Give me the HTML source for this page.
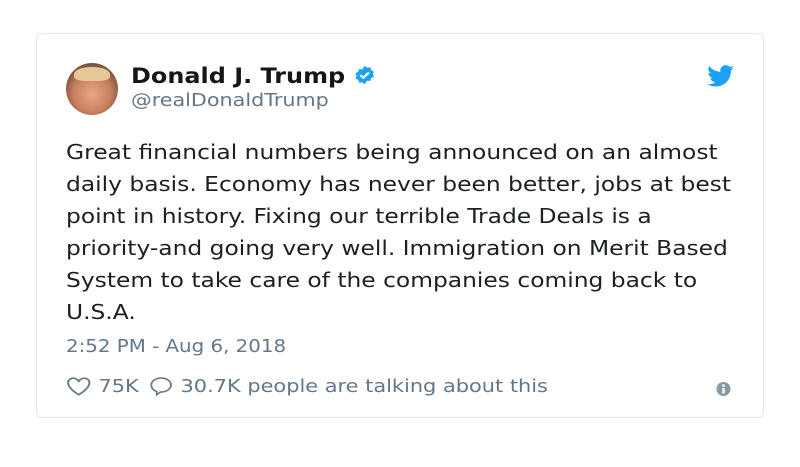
<!DOCTYPE html>
<html><head><style>
body{margin:0;width:800px;height:467px;background:#fff;font-family:"DejaVu Sans","Liberation Sans",sans-serif;position:relative;overflow:hidden}
.card{position:absolute;left:36px;top:33px;width:728px;height:385px;border:1px solid #e1e8ed;border-radius:6px;box-sizing:border-box}
.av{position:absolute;left:66px;top:63px;width:52px;height:52px;border-radius:50%;background:radial-gradient(circle at 50% 60%,#e8a58a 0,#c9805f 45%,#7a5040 75%,#3a3a44 100%)}
.av:before{content:"";position:absolute;left:8px;top:4px;width:36px;height:14px;border-radius:50% 50% 30% 30%;background:#e6c79a}
.name{position:absolute;left:131px;top:64px;font-weight:bold;font-size:21px;color:#14171a;white-space:nowrap;transform:scaleX(1.14);transform-origin:left}
.handle{position:absolute;left:131px;top:90px;font-size:18px;color:#657786;transform:scaleX(1.15);transform-origin:left}
.body{position:absolute;left:66px;top:136px;white-space:nowrap;font-size:20.2px;line-height:32px;color:#1c2022;transform:scaleX(1.157);transform-origin:left}
.time{position:absolute;left:66px;top:336px;font-size:18px;color:#657786;transform:scaleX(1.10);transform-origin:left;white-space:nowrap}
.act{position:absolute;left:66px;top:374px;font-size:18px;color:#657786;white-space:nowrap;display:flex;align-items:center;gap:6px;transform:scaleX(1.16);transform-origin:left}
</style></head><body>
<div class="card"></div>
<div class="av"></div>
<div class="name">Donald J. Trump <svg width="20" height="22" viewBox="0 0 24 24" style="vertical-align:-3px"><path fill="#1da1f2" d="M12 1l2.6 2.2 3.4-.3.8 3.3 3 1.7-1.3 3.1 1.3 3.1-3 1.7-.8 3.3-3.4-.3L12 23l-2.6-2.2-3.4.3-.8-3.3-3-1.7L3.5 13 2.2 9.9l3-1.7.8-3.3 3.4.3z"/><path d="M7.5 12.3l3 3 6-6.3" stroke="#fff" stroke-width="2.4" fill="none"/></svg></div>
<div class="handle">@realDonaldTrump</div>
<svg style="position:absolute;left:707px;top:65px" width="27" height="22" viewBox="0 0 24 20"><path fill="#1da1f2" d="M24 2.4c-.9.4-1.8.7-2.8.8 1-.6 1.8-1.6 2.2-2.7-1 .6-2 1-3.1 1.2C19.4.7 18.1.1 16.7.1c-2.7 0-4.9 2.2-4.9 4.9 0 .4 0 .8.1 1.1C7.8 5.9 4.2 4 1.7 1 1.3 1.7 1 2.6 1 3.5c0 1.7.9 3.2 2.2 4.1-.8 0-1.6-.2-2.2-.6v.1c0 2.4 1.7 4.4 3.9 4.8-.4.1-.8.2-1.3.2-.3 0-.6 0-.9-.1.6 2 2.4 3.4 4.6 3.4-1.7 1.3-3.8 2.1-6.1 2.1-.4 0-.8 0-1.2-.1 2.2 1.4 4.8 2.2 7.5 2.2 9.1 0 14-7.5 14-14v-.6c1-.7 1.8-1.6 2.5-2.6z"/></svg>
<div class="body">Great financial numbers being announced on an almost<br>daily basis. Economy has never been better, jobs at best<br>point in history. Fixing our terrible Trade Deals is a<br>priority-and going very well. Immigration on Merit Based<br>System to take care of the companies coming back to<br>U.S.A.</div>
<div class="time">2:52 PM - Aug 6, 2018</div>
<div class="act"><svg width="22" height="22" viewBox="0 0 24 22"><path d="M12 20.5S2 14 2 7.5C2 4.5 4.2 2.5 6.8 2.5c2.2 0 3.8 1.3 5.2 3.3 1.4-2 3-3.3 5.2-3.3 2.6 0 4.8 2 4.8 5 0 6.5-10 13-10 13z" fill="none" stroke="#657786" stroke-width="1.8"/></svg><span>75K</span><svg width="22" height="24" viewBox="0 0 26 24" style="margin-left:2px"><path d="M13 2.5c5.5 0 10 3.6 10 8.3 0 4.6-4.5 8.3-10 8.3h-.5l-4 3.2v-3.8C5 17 3 14.2 3 10.8 3 6.1 7.5 2.5 13 2.5z" fill="none" stroke="#657786" stroke-width="1.8"/></svg><span>30.7K people are talking about this</span></div>
<svg style="position:absolute;left:716px;top:381px" width="15" height="16" viewBox="0 0 15 16"><circle cx="7.5" cy="8" r="7" fill="#8899a6"/><rect x="6.3" y="7" width="2.4" height="5.5" fill="#fff"/><circle cx="7.5" cy="4.6" r="1.3" fill="#fff"/></svg>
</body></html>
